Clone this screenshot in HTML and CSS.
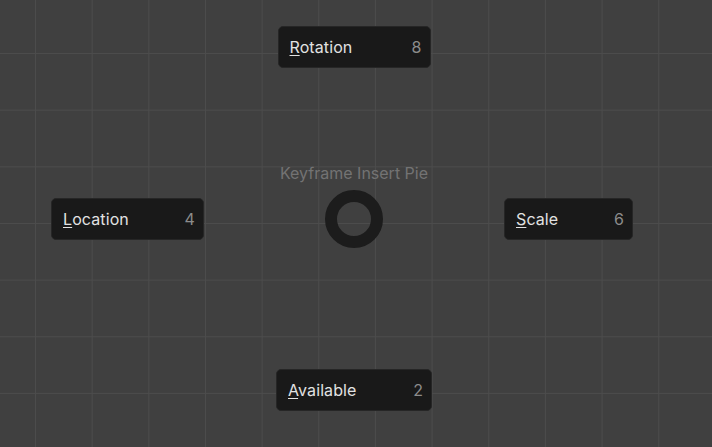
FILE: index.html
```html
<!DOCTYPE html>
<html lang="en">
<head>
<meta charset="utf-8">
<title>Keyframe Insert Pie</title>
<link rel="stylesheet" href="styles.css">
</head>
<body>
<div class="viewport">
  <div class="pie">
    <div class="item item-top"><span class="label"><span class="key">R</span>otation</span><span class="num">8</span></div>
    <div class="item item-left"><span class="label"><span class="key">L</span>ocation</span><span class="num">4</span></div>
    <div class="center">
      <div class="title">Keyframe Insert Pie</div>
      <div class="ring"></div>
    </div>
    <div class="item item-right"><span class="label"><span class="key">S</span>cale</span><span class="num">6</span></div>
    <div class="item item-bottom"><span class="label"><span class="key">A</span>vailable</span><span class="num">2</span></div>
  </div>
</div>
</body>
</html>
```
FILE: styles.css
```css
html, body {
  margin: 0;
  padding: 0;
}
body {
  width: 712px;
  height: 447px;
  overflow: hidden;
  font-family: Inter, "Noto Sans", "DejaVu Sans", sans-serif;
}
.viewport {
  width: 712px;
  height: 447px;
  background-color: #404040;
  background-image:
    linear-gradient(to right, #4c4c4c 0, #4c4c4c 1px, transparent 1px),
    linear-gradient(to bottom, #4c4c4c 0, #4c4c4c 1px, transparent 1px);
  background-size: 56.667px 56.667px;
  background-position: 35px 53px;
}
.pie {
  display: grid;
  grid-template-columns: 204px 300px 1fr;
  grid-template-rows: 42px 301px 42px;
  padding-top: 26px;
}
.item {
  box-sizing: border-box;
  height: 42px;
  display: flex;
  align-items: center;
  justify-content: space-between;
  padding: 0 8px 0 11px;
  background: #191919;
  border: 1px solid #262626;
  border-radius: 5px;
  font-size: 16px;
  letter-spacing: 0.1px;
}
.label {
  color: #e2e2e2;
}
.key {
  text-decoration: underline;
  text-decoration-thickness: 1px;
  text-underline-offset: 2px;
}
.num {
  color: #8c8c8c;
}
.item-top {
  grid-column: 2;
  grid-row: 1;
  justify-self: center;
  width: 153px;
}
.item-left {
  grid-column: 1;
  grid-row: 2;
  justify-self: end;
  align-self: center;
  width: 153px;
}
.item-right {
  grid-column: 3;
  grid-row: 2;
  justify-self: start;
  align-self: center;
  width: 129px;
}
.item-bottom {
  grid-column: 2;
  grid-row: 3;
  justify-self: center;
  width: 156px;
}
.center {
  grid-column: 2;
  grid-row: 2;
  display: flex;
  flex-direction: column;
  align-items: center;
  padding-top: 95px;
}
.title {
  font-size: 16px;
  line-height: 20px;
  color: #737373;
}
.ring {
  box-sizing: border-box;
  width: 58px;
  height: 58px;
  margin-top: 7px;
  border: 12px solid #1c1c1c;
  border-radius: 50%;
}
```
